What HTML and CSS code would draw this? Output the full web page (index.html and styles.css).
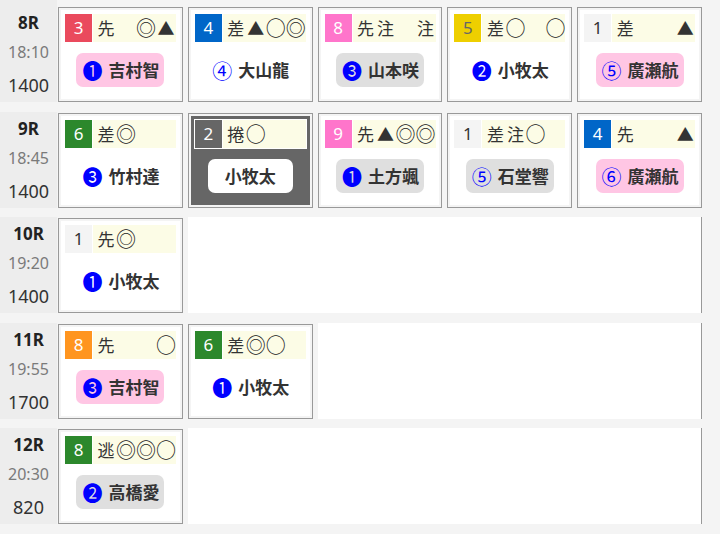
FILE: index.html
```html
<!DOCTYPE html>
<html lang="ja">
<head>
<meta charset="utf-8">
<link rel="stylesheet" href="styles.css">
</head>
<body>
<div class="board">

  <div class="row">
    <div class="label"><div class="rno">8R</div><div class="time">18:10</div><div class="dist">1400</div></div>
    <div class="cards">
      <div class="cell"><div class="card">
        <div class="head"><span class="num c-red">3</span><span class="marks"><span>先</span><span></span><span class="o">◎</span><span>▲</span></span></div>
        <div class="body"><span class="pill pink"><span class="cn">❶</span>吉村智</span></div>
      </div></div>
      <div class="cell"><div class="card">
        <div class="head"><span class="num c-blue">4</span><span class="marks"><span>差</span><span>▲</span><span class="o">○</span><span class="o">◎</span></span></div>
        <div class="body"><span class="pill"><span class="cn">④</span>大山龍</span></div>
      </div></div>
      <div class="cell"><div class="card">
        <div class="head"><span class="num c-pink">8</span><span class="marks"><span>先</span><span>注</span><span></span><span>注</span></span></div>
        <div class="body"><span class="pill gray"><span class="cn">❸</span>山本咲</span></div>
      </div></div>
      <div class="cell"><div class="card">
        <div class="head"><span class="num c-yellow">5</span><span class="marks"><span>差</span><span class="o">○</span><span></span><span class="o">○</span></span></div>
        <div class="body"><span class="pill"><span class="cn">❷</span>小牧太</span></div>
      </div></div>
      <div class="cell"><div class="card">
        <div class="head"><span class="num c-white">1</span><span class="marks"><span>差</span><span></span><span></span><span>▲</span></span></div>
        <div class="body"><span class="pill pink"><span class="cn">⑤</span>廣瀬航</span></div>
      </div></div>
    </div>
  </div>

  <div class="row">
    <div class="label"><div class="rno">9R</div><div class="time">18:45</div><div class="dist">1400</div></div>
    <div class="cards">
      <div class="cell"><div class="card">
        <div class="head"><span class="num c-green">6</span><span class="marks"><span>差</span><span class="o">◎</span><span></span><span></span></span></div>
        <div class="body"><span class="pill"><span class="cn">❸</span>竹村達</span></div>
      </div></div>
      <div class="cell"><div class="card dark">
        <div class="head"><span class="num c-dark">2</span><span class="marks"><span>捲</span><span class="o">○</span><span></span><span></span></span></div>
        <div class="body"><span class="pill white">小牧太</span></div>
      </div></div>
      <div class="cell"><div class="card">
        <div class="head"><span class="num c-pink">9</span><span class="marks"><span>先</span><span>▲</span><span class="o">◎</span><span class="o">◎</span></span></div>
        <div class="body"><span class="pill gray"><span class="cn">❶</span>土方颯</span></div>
      </div></div>
      <div class="cell"><div class="card">
        <div class="head"><span class="num c-white">1</span><span class="marks"><span>差</span><span>注</span><span class="o">○</span><span></span></span></div>
        <div class="body"><span class="pill gray"><span class="cn">⑤</span>石堂響</span></div>
      </div></div>
      <div class="cell"><div class="card">
        <div class="head"><span class="num c-blue">4</span><span class="marks"><span>先</span><span></span><span></span><span>▲</span></span></div>
        <div class="body"><span class="pill pink"><span class="cn">⑥</span>廣瀬航</span></div>
      </div></div>
    </div>
  </div>

  <div class="row">
    <div class="label"><div class="rno">10R</div><div class="time">19:20</div><div class="dist">1400</div></div>
    <div class="cards">
      <div class="cell"><div class="card">
        <div class="head"><span class="num c-white">1</span><span class="marks"><span>先</span><span class="o">◎</span><span></span><span></span></span></div>
        <div class="body"><span class="pill"><span class="cn">❶</span>小牧太</span></div>
      </div></div>
      <div class="filler"></div>
    </div>
  </div>

  <div class="row">
    <div class="label"><div class="rno">11R</div><div class="time">19:55</div><div class="dist">1700</div></div>
    <div class="cards">
      <div class="cell"><div class="card">
        <div class="head"><span class="num c-orange">8</span><span class="marks"><span>先</span><span></span><span></span><span class="o">○</span></span></div>
        <div class="body"><span class="pill pink"><span class="cn">❸</span>吉村智</span></div>
      </div></div>
      <div class="cell"><div class="card">
        <div class="head"><span class="num c-green">6</span><span class="marks"><span>差</span><span class="o">◎</span><span class="o">○</span><span></span></span></div>
        <div class="body"><span class="pill"><span class="cn">❶</span>小牧太</span></div>
      </div></div>
      <div class="filler"></div>
    </div>
  </div>

  <div class="row">
    <div class="label"><div class="rno">12R</div><div class="time">20:30</div><div class="dist">820</div></div>
    <div class="cards">
      <div class="cell"><div class="card">
        <div class="head"><span class="num c-green">8</span><span class="marks"><span>逃</span><span class="o">◎</span><span class="o">◎</span><span class="o">○</span></span></div>
        <div class="body"><span class="pill gray"><span class="cn">❷</span>高橋愛</span></div>
      </div></div>
      <div class="filler"></div>
    </div>
  </div>

</div>
</body>
</html>
```

FILE: styles.css
```css
html, body {
  margin: 0;
  padding: 0;
}
body {
  background: #f4f4f4;
  font-family: "Noto Sans", "Noto Sans CJK JP", sans-serif;
  color: #333;
}
.board {
  width: 702px;
  padding-top: 6px;
}
.row {
  display: flex;
  gap: 1px;
  height: 96px;
  margin-bottom: 9.5px;
}
.label {
  width: 57px;
  flex: none;
  background: #ededed;
  box-sizing: border-box;
  padding-top: 6px;
  text-align: center;
}
.row:first-child .label {
  margin-top: -6px;
  padding-top: 12px;
}
.rno {
  font-size: 17px;
  font-weight: bold;
  line-height: 22px;
  color: #222;
}
.time {
  font-size: 16px;
  line-height: 36px;
  color: #7a7a7a;
}
.dist {
  font-size: 18px;
  line-height: 30px;
  color: #333;
}
.cards {
  flex: 1;
  display: flex;
  gap: 5px;
  align-items: flex-start;
}
.cell {
  width: 124.8px;
  height: 95px;
  margin-top: 1px;
  flex: none;
  box-sizing: border-box;
  border: 1px solid #999;
  padding: 2px;
}
.card {
  height: 100%;
  box-sizing: border-box;
  background: #fff;
  padding: 4px;
}
.card.dark {
  background: #666;
}
.filler {
  flex: 1;
  align-self: stretch;
  background: #fff;
  border-right: 1px solid #999;
}
.head {
  display: flex;
  height: 28px;
  background: #fff;
  box-shadow: 0 0 0 1px #fff;
}
.num {
  width: 27px;
  margin-right: 1px;
  flex: none;
  text-align: center;
  line-height: 28px;
  font-size: 17px;
  color: #fff;
}
.c-red { background: #ea4a5d; }
.c-blue { background: #0066c8; }
.c-pink { background: #ff75cb; }
.c-yellow { background: #eecf00; color: #666; }
.c-white { background: #f4f4f4; color: #333; }
.c-green { background: #2c882c; }
.c-orange { background: #ff951f; }
.c-dark { background: #666; }
.marks {
  flex: 1;
  display: flex;
  padding-left: 3px;
  background: #fcfce6;
  font-family: "Noto Sans CJK JP", sans-serif;
}
.marks span {
  width: 20px;
  flex: none;
  text-align: center;
  line-height: 28px;
  font-size: 17px;
  color: #333;
  white-space: nowrap;
}
.marks span.o {
  font-size: 20px;
  line-height: 27px;
  color: #222;
}
.body {
  display: flex;
  justify-content: center;
  padding-top: 11px;
}
.pill {
  height: 34px;
  line-height: 34px;
  padding: 0 5px 0 6px;
  border-radius: 7px;
  font-family: "Noto Sans CJK JP", sans-serif;
  font-size: 17px;
  font-weight: bold;
  color: #333;
  white-space: nowrap;
}
.pill.pink { background: #ffc6e4; }
.pill.gray { background: #dfdfdf; }
.pill.white { background: #fff; padding: 0 17px; }
.cn {
  color: #0000ff;
  font-weight: normal;
  font-size: 20px;
  line-height: 1;
  vertical-align: -2px;
  margin-right: 6px;
}
```
